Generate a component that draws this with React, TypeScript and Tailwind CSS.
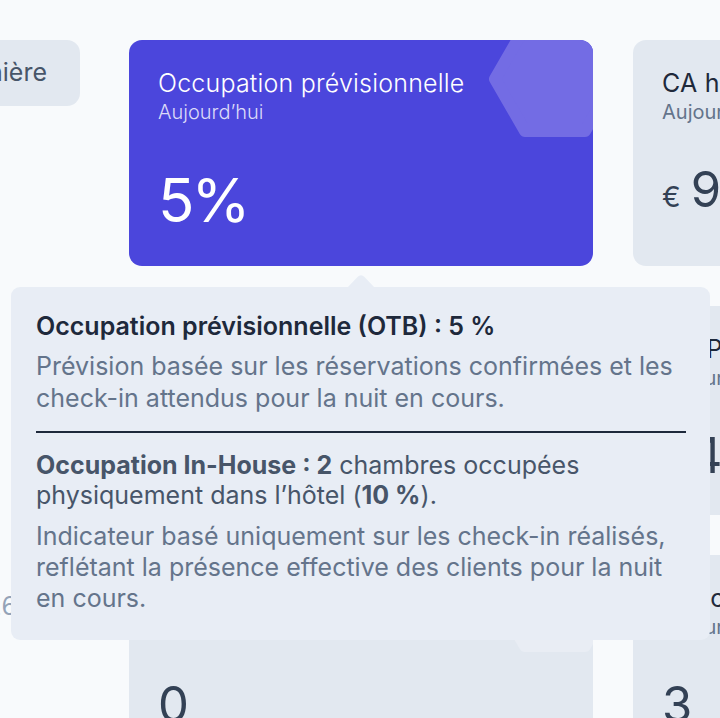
import React from "react";

function HexRounded({ light }: { light?: boolean }) {
  const c = light ? "#e9edf4" : "#736ce4";
  return (
    <svg
      className="absolute left-[354px] top-0 pointer-events-none"
      width="110"
      height="100"
      viewBox="0 0 110 100"
    >
      <polygon
        points="42,-13 102,-13 132,39 102,91 42,91 12,39"
        fill={c}
        stroke={c}
        strokeWidth="12"
        strokeLinejoin="round"
      />
    </svg>
  );
}

function GrayCard({
  title,
  value,
  euro,
  hex,
}: {
  title: string;
  value: string;
  euro?: boolean;
  hex?: boolean;
}) {
  return (
    <div className="relative h-full rounded-[13px] bg-[#e2e8f0] overflow-hidden px-[29px] pt-[28px]">
      {hex && <HexRounded light />}
      <div className="relative text-[25px] leading-[31px] text-[#1e293b] whitespace-nowrap tracking-[0.2px]">
        {title}
      </div>
      <div className="relative text-[20px] leading-[26px] text-[#64748b] whitespace-nowrap">
        Aujourd’hui
      </div>
      <div className="relative mt-[40px] flex items-baseline gap-[10px] text-[#334155] whitespace-nowrap">
        {euro && <span className="text-[28px] leading-none">€</span>}
        <span className="text-[49px] leading-none">{value}</span>
      </div>
    </div>
  );
}

export default function App() {
  return (
    <div className="relative w-[720px] h-[718px] overflow-hidden bg-[#f8fafc] font-['Inter','Noto_Sans',sans-serif]">
      <div className="flex gap-[40px] pt-[40px] ml-[-151px]">
        {/* column A */}
        <div className="w-[240px] shrink-0 flex flex-col">
          <div className="w-[231px] h-[66px] rounded-[13px] bg-[#e2e8f0] flex items-center justify-end pr-[33px] text-[25px] text-[#475569] whitespace-nowrap">
            Veille dernière
          </div>
          <div className="mt-[482px] text-right pr-[72px] text-[25px] text-[#94a3b8] whitespace-nowrap">
            26
          </div>
        </div>

        {/* columns B and C */}
        <div className="grid grid-cols-[464px_464px] grid-rows-[226px_209px_200px] gap-x-[40px] gap-y-[40px] shrink-0">
          {/* B1 */}
          <div className="relative rounded-[13px] bg-[#4b46dc] overflow-hidden px-[29px] pt-[28px]">
            <HexRounded />
            <div className="relative text-[25px] leading-[31px] text-white font-light whitespace-nowrap tracking-[0.2px]">
              Occupation prévisionnelle
            </div>
            <div className="relative text-[20px] leading-[26px] text-[#dcdbf8] font-light whitespace-nowrap">
              Aujourd’hui
            </div>
            <div className="relative mt-[45px] text-[60px] leading-none text-white tracking-[-3px]">
              5%
            </div>
          </div>
          {/* C1 */}
          <GrayCard title="CA hébergement" value="980" euro />
          {/* B2 */}
          <GrayCard title="Chambres occupées" value="2" />
          {/* C2 */}
          <GrayCard title="RevPAR prévisionnel" value="49" euro />
          {/* B3 */}
          <GrayCard title="Arrivées" value="0" hex />
          {/* C3 */}
          <GrayCard title="Check-in" value="3" />
        </div>
      </div>

      {/* tooltip */}
      <div className="absolute left-[11px] top-[287px] w-[699px] h-[353px] rounded-[9px] bg-[#e8edf5] pl-[25px] pr-[24px] pt-[24px]">
        <svg
          className="absolute left-[336px] top-[-13px]"
          width="28"
          height="14"
          viewBox="0 0 28 14"
        >
          <path d="M0 14 L10.5 3 Q14 -0.5 17.5 3 L28 14 Z" fill="#e8edf5" />
        </svg>
        <p className="text-[25px] leading-[31px] font-semibold text-[#1e293b] whitespace-nowrap">
          Occupation prévisionnelle (OTB) : 5 %
        </p>
        <p className="mt-[8px] text-[25px] leading-[32px] text-[#64748b] whitespace-nowrap">
          Prévision basée sur les réservations confirmées et les
          <br />
          check-in attendus pour la nuit en cours.
        </p>
        <div className="mt-[17px] h-[2px] bg-[#1e293b]" />
        <p className="mt-[17px] text-[25px] leading-[30px] text-[#475569] whitespace-nowrap">
          <span className="font-bold">Occupation In-House : 2</span> chambres occupées
          <br />
          physiquement dans l’hôtel (<span className="font-bold">10 %</span>).
        </p>
        <p className="mt-[11px] text-[25px] leading-[31px] text-[#64748b] whitespace-nowrap">
          Indicateur basé uniquement sur les check-in réalisés,
          <br />
          reflétant la présence effective des clients pour la nuit
          <br />
          en cours.
        </p>
      </div>
    </div>
  );
}
